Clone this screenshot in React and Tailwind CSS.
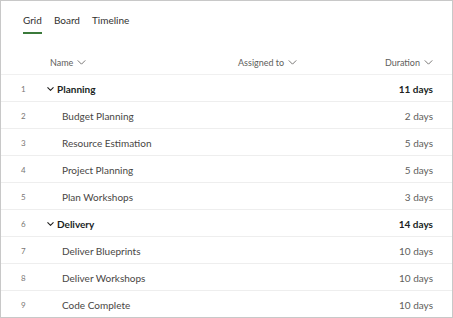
import React from "react";

const rows = [
  { n: 1, name: "Planning", dur: "11 days", group: true },
  { n: 2, name: "Budget Planning", dur: "2 days" },
  { n: 3, name: "Resource Estimation", dur: "5 days" },
  { n: 4, name: "Project Planning", dur: "5 days" },
  { n: 5, name: "Plan Workshops", dur: "3 days" },
  { n: 6, name: "Delivery", dur: "14 days", group: true },
  { n: 7, name: "Deliver Blueprints", dur: "10 days" },
  { n: 8, name: "Deliver Workshops", dur: "10 days" },
  { n: 9, name: "Code Complete", dur: "10 days" },
];

function Chev({ className = "", sw = 1 }) {
  return (
    <svg viewBox="0 0 10 6" className={className} fill="none" stroke="currentColor" strokeWidth={sw}>
      <path d="M0.5 0.5 L5 5 L9.5 0.5" />
    </svg>
  );
}

export default function App() {
  return (
    <div
      className="w-[453px] h-[318px] border border-[#c8c8c8] bg-white overflow-hidden box-border"
      style={{ fontFamily: 'Lato, "Open Sans", sans-serif' }}
    >
      <div className="flex gap-[12px] pl-[22px] pt-[11px] text-[10px] text-[#323130]">
        <div className="flex flex-col items-center">
          <span className="leading-[16px]">Grid</span>
          <div className="mt-[4px] h-[2px] w-full bg-[#3b7a3b]" />
        </div>
        <span className="leading-[16px]">Board</span>
        <span className="leading-[16px]">Timeline</span>
      </div>
      <div className="flex items-center h-[41px] pt-[17px] border-b border-[#f0f0f0] text-[9px] text-[#605e5c]">
        <div className="w-[49px]" />
        <div className="w-[188px] flex items-center gap-[4px]">
          Name <Chev className="w-[9px] h-[5px]" />
        </div>
        <div className="flex-1 flex items-center gap-[4px]">
          Assigned to <Chev className="w-[9px] h-[5px]" />
        </div>
        <div className="pr-[19px] flex items-center gap-[4px]">
          Duration <Chev className="w-[9px] h-[5px]" />
        </div>
      </div>
      {rows.map((r) => (
        <div
          key={r.n}
          className="flex items-center h-[27px] pt-[2px] border-b border-[#eeeeee]"
        >
          <div className="w-[46px] pl-[20px] text-[8px] text-[#7a7775]">{r.n}</div>
          {r.group ? (
            <div className="flex-1 flex items-center gap-[3px] text-[10px] font-bold text-[#201f1e]">
              <Chev className="w-[7px] h-[4px]" sw={1.6} />
              <span>{r.name}</span>
            </div>
          ) : (
            <div className="flex-1 pl-[15px] text-[10px] text-[#484644]">{r.name}</div>
          )}
          <div
            className={
              "pr-[19px] text-[10px] " +
              (r.group ? "font-bold text-[#201f1e]" : "text-[#605e5c]")
            }
          >
            {r.dur}
          </div>
        </div>
      ))}
    </div>
  );
}
